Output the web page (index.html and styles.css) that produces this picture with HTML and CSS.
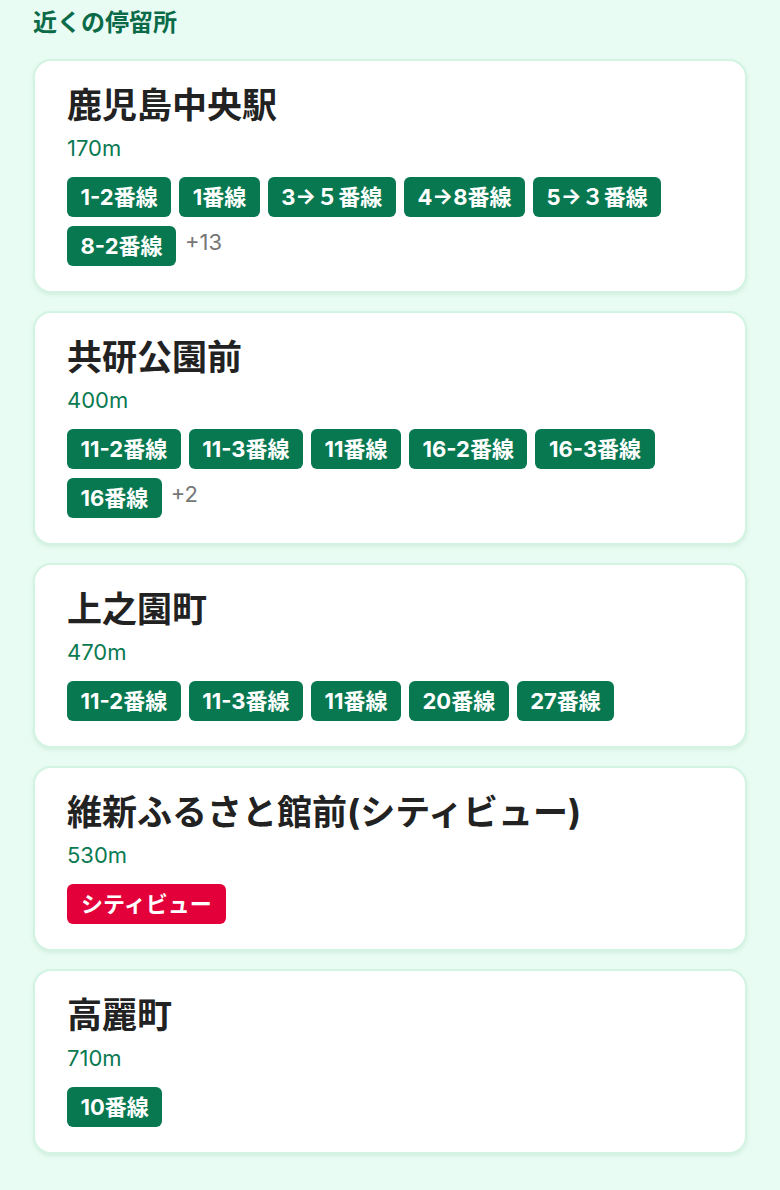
FILE: index.html
```html
<!DOCTYPE html>
<html lang="ja">
<head>
<meta charset="utf-8">
<link rel="stylesheet" href="styles.css">
</head>
<body>
<h2 class="heading">近くの停留所</h2>
<div class="list">
  <div class="card">
    <div class="name">鹿児島中央駅</div>
    <div class="dist">170m</div>
    <div class="tags">
      <span class="tag">1-2番線</span><span class="tag">1番線</span><span class="tag">3→５番線</span><span class="tag">4→8番線</span><span class="tag">5→３番線</span><span class="tag">8-2番線</span><span class="more">+13</span>
    </div>
  </div>
  <div class="card">
    <div class="name">共研公園前</div>
    <div class="dist">400m</div>
    <div class="tags">
      <span class="tag">11-2番線</span><span class="tag">11-3番線</span><span class="tag">11番線</span><span class="tag">16-2番線</span><span class="tag">16-3番線</span><span class="tag">16番線</span><span class="more">+2</span>
    </div>
  </div>
  <div class="card">
    <div class="name">上之園町</div>
    <div class="dist">470m</div>
    <div class="tags">
      <span class="tag">11-2番線</span><span class="tag">11-3番線</span><span class="tag">11番線</span><span class="tag">20番線</span><span class="tag">27番線</span>
    </div>
  </div>
  <div class="card">
    <div class="name">維新ふるさと館前(シティビュー)</div>
    <div class="dist">530m</div>
    <div class="tags">
      <span class="tag tag-red">シティビュー</span>
    </div>
  </div>
  <div class="card">
    <div class="name">高麗町</div>
    <div class="dist">710m</div>
    <div class="tags">
      <span class="tag">10番線</span>
    </div>
  </div>
</div>
</body>
</html>
```
FILE: styles.css
```css
* { box-sizing: border-box; }
html, body { background: #e9fcf3; }
body {
  margin: 0;
  padding: 9px 33px 30px;
  font-family: "Inter", "Noto Sans CJK JP", sans-serif;
}
.heading {
  margin: 0 0 22px;
  font-size: 24px;
  line-height: 28px;
  font-weight: 700;
  color: #0b6b49;
}
.list {
  display: flex;
  flex-direction: column;
  gap: 18px;
}
.card {
  background: #fff;
  border: 2px solid #d3f3e3;
  border-radius: 18px;
  padding: 23px 32px 25px;
  box-shadow: 0 2px 4px rgba(60, 140, 100, 0.12);
}
.name {
  font-size: 35px;
  line-height: 42px;
  font-weight: 700;
  color: #222;
}
.dist {
  margin-top: 9px;
  font-size: 22px;
  line-height: 26px;
  color: #0a7a52;
}
.tags {
  margin-top: 16px;
  display: flex;
  flex-wrap: wrap;
  gap: 9px 8px;
  align-items: flex-start;
}
.tag {
  display: inline-block;
  height: 40px;
  line-height: 40px;
  padding: 0 13.5px;
  border-radius: 6px;
  background: #087851;
  color: #fff;
  font-size: 22px;
  font-weight: 700;
}
.tag-red { background: #e3003a; padding: 0 14px; }
.more {
  font-size: 22px;
  line-height: 32px;
  color: #777;
  margin-left: 1px;
}
```
